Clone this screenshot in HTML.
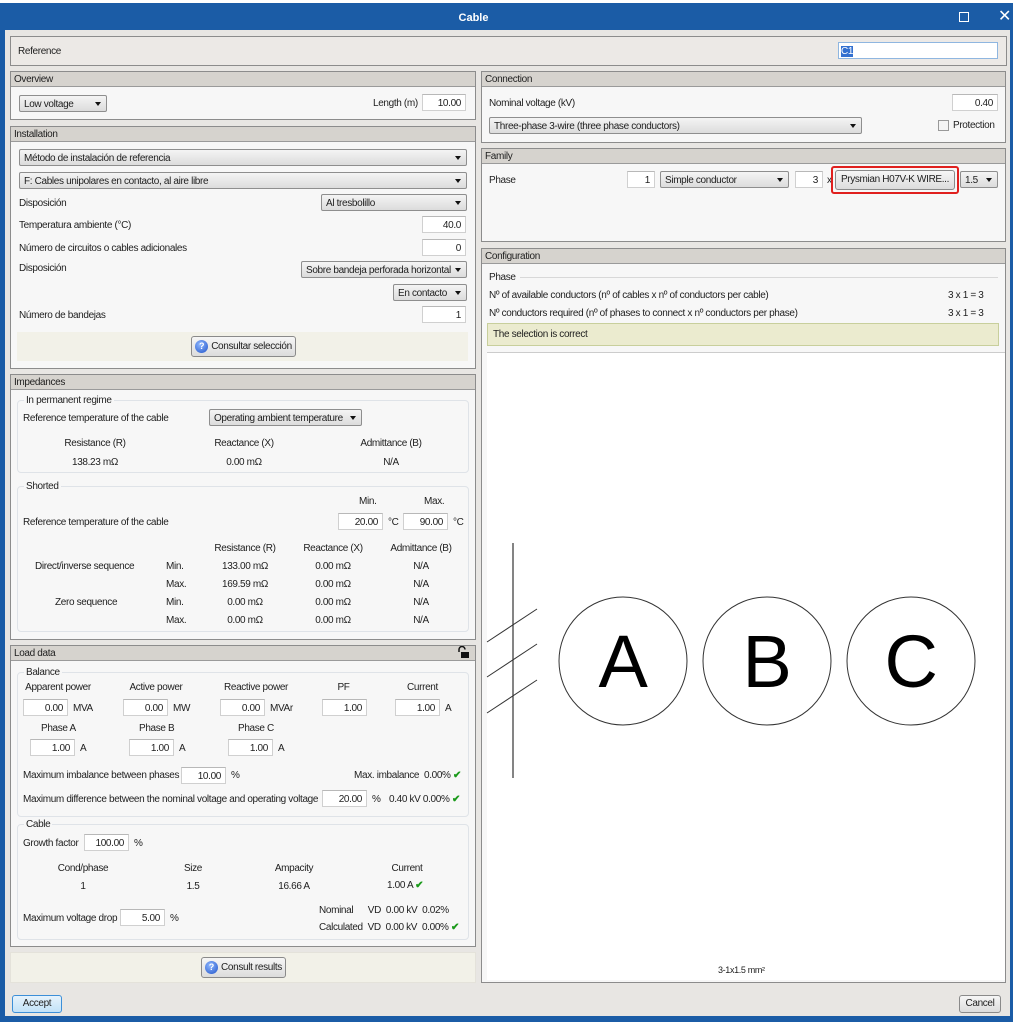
<!DOCTYPE html>
<html><head><meta charset="utf-8"><style>
*{box-sizing:border-box;margin:0;padding:0}
body{width:1017px;height:1024px;position:relative;background:#fff;font-family:"Liberation Sans",sans-serif;font-size:10px;letter-spacing:-0.35px;color:#1e1e1e;overflow:hidden}
.a{position:absolute;white-space:nowrap}
.win{position:absolute;left:0;top:3px;width:1013px;height:1019px;background:#1b5ca6}
.client{position:absolute;left:5px;top:30px;width:1005px;height:986px;background:#e8e6e3}
.pnl{position:absolute;border:1px solid #8c8c8c;background:#f7f7f7}
.hdr{position:absolute;left:0;right:0;top:0;height:15px;background:#d6d3ce;border-bottom:1px solid #9a9a9a;padding-left:3px;line-height:15px}
.inp{position:absolute;white-space:nowrap;background:#fff;border:1px solid #d0d0d0;border-top-color:#b8b8b8;height:17px;text-align:right;padding-right:4px;padding-top:1px;line-height:16px}
.sel{position:absolute;white-space:nowrap;overflow:hidden;height:17px;border:1px solid #8e8e8e;border-radius:2px;background:linear-gradient(#f4f4f4,#dcdcdc);padding-left:4px;padding-top:1px;line-height:16px}
.sel:after{content:"";position:absolute;right:5px;top:6px;border:3.5px solid transparent;border-top:4px solid #111;border-bottom:0}
.btn{position:absolute;white-space:nowrap;border:1px solid #8a8a8a;border-radius:3px;background:linear-gradient(#f6f6f6,#dcdcdc);text-align:center;line-height:19px}
.grp{position:absolute;border:1px solid #dfe3e8;border-radius:4px}
.gl{position:absolute;top:-7px;left:6px;background:#f7f7f7;padding:0 2px}
.ic{display:inline-block;width:13px;height:13px;border-radius:50%;background:radial-gradient(circle at 40% 35%,#8fb8ff,#1f52c8);color:#fff;font-size:9px;font-weight:bold;line-height:13px;vertical-align:middle;margin-right:3px;letter-spacing:0}
.ck{color:#1a9a1a;font-weight:bold}
.c{text-align:center}
</style></head><body>
<div class="win"></div>
<div class="a" style="left:0;top:12px;width:947px;text-align:center;color:#fff;font-weight:bold;font-size:11px;letter-spacing:0">Cable</div>
<div class="a" style="left:959px;top:12px;width:10px;height:10px;border:1.5px solid #fff"></div>
<div class="a" style="left:998px;top:6px;color:#fff;font-size:16px">✕</div>
<div class="client"></div>

<div class="pnl" style="left:10px;top:36px;width:997px;height:30px;background:#ece9e6"></div>
<div class="a" style="left:18px;top:46px">Reference</div>
<div class="inp" style="left:838px;top:42px;width:160px;border-color:#8fb6e0;text-align:left;padding-left:2px"><span style="background:#3370d0;color:#fff">C1</span></div>

<div class="pnl" style="left:10px;top:71px;width:466px;height:49px"><div class="hdr">Overview</div></div>
<div class="sel" style="left:19px;top:95px;width:88px">Low voltage</div>
<div class="a" style="left:373px;top:98px">Length (m)</div>
<div class="inp" style="left:422px;top:94px;width:44px">10.00</div>

<div class="pnl" style="left:10px;top:126px;width:466px;height:243px"><div class="hdr">Installation</div></div>
<div class="sel" style="left:19px;top:149px;width:448px">Método de instalación de referencia</div>
<div class="sel" style="left:19px;top:172px;width:448px">F: Cables unipolares en contacto, al aire libre</div>
<div class="a" style="left:19px;top:198px">Disposición</div>
<div class="sel" style="left:321px;top:194px;width:146px">Al tresbolillo</div>
<div class="a" style="left:19px;top:220px">Temperatura ambiente (°C)</div>
<div class="inp" style="left:422px;top:216px;width:44px">40.0</div>
<div class="a" style="left:19px;top:243px">Número de circuitos o cables adicionales</div>
<div class="inp" style="left:422px;top:239px;width:44px">0</div>
<div class="a" style="left:19px;top:263px">Disposición</div>
<div class="sel" style="left:301px;top:261px;width:166px">Sobre bandeja perforada horizontal</div>
<div class="sel" style="left:393px;top:284px;width:74px">En contacto</div>
<div class="a" style="left:19px;top:310px">Número de bandejas</div>
<div class="inp" style="left:422px;top:306px;width:44px">1</div>
<div class="a" style="left:17px;top:332px;width:451px;height:29px;background:#f2f1e8"></div>
<div class="btn" style="left:191px;top:336px;width:105px;height:21px"><span class="ic">?</span>Consultar selección</div>

<div class="pnl" style="left:10px;top:374px;width:466px;height:266px"><div class="hdr">Impedances</div></div>
<div class="grp" style="left:17px;top:400px;width:452px;height:73px"><span class="gl" style="top:-6px">In permanent regime</span></div>
<div class="a" style="left:23px;top:413px">Reference temperature of the cable</div>
<div class="sel" style="left:209px;top:409px;width:153px">Operating ambient temperature</div>
<div class="a c" style="left:55px;top:438px;width:80px">Resistance (R)</div>
<div class="a c" style="left:204px;top:438px;width:80px">Reactance (X)</div>
<div class="a c" style="left:351px;top:438px;width:80px">Admittance (B)</div>
<div class="a c" style="left:55px;top:457px;width:80px">138.23 mΩ</div>
<div class="a c" style="left:204px;top:457px;width:80px">0.00 mΩ</div>
<div class="a c" style="left:351px;top:457px;width:80px">N/A</div>
<div class="grp" style="left:17px;top:486px;width:452px;height:146px"><span class="gl" style="top:-6px">Shorted</span></div>
<div class="a" style="left:359px;top:496px">Min.</div>
<div class="a" style="left:424px;top:496px">Max.</div>
<div class="a" style="left:23px;top:517px">Reference temperature of the cable</div>
<div class="inp" style="left:338px;top:513px;width:45px">20.00</div><div class="a" style="left:388px;top:517px">°C</div>
<div class="inp" style="left:403px;top:513px;width:45px">90.00</div><div class="a" style="left:453px;top:517px">°C</div>
<div class="a c" style="left:205px;top:543px;width:80px">Resistance (R)</div>
<div class="a c" style="left:293px;top:543px;width:80px">Reactance (X)</div>
<div class="a c" style="left:381px;top:543px;width:80px">Admittance (B)</div>
<div class="a" style="left:35px;top:561px">Direct/inverse sequence</div>
<div class="a" style="left:55px;top:597px">Zero sequence</div>
<div class="a" style="left:166px;top:561px">Min.</div><div class="a" style="left:166px;top:579px">Max.</div>
<div class="a" style="left:166px;top:597px">Min.</div><div class="a" style="left:166px;top:615px">Max.</div>
<div class="a c" style="left:205px;top:561px;width:80px">133.00 mΩ</div>
<div class="a c" style="left:205px;top:579px;width:80px">169.59 mΩ</div>
<div class="a c" style="left:205px;top:597px;width:80px">0.00 mΩ</div>
<div class="a c" style="left:205px;top:615px;width:80px">0.00 mΩ</div>
<div class="a c" style="left:293px;top:561px;width:80px">0.00 mΩ</div>
<div class="a c" style="left:293px;top:579px;width:80px">0.00 mΩ</div>
<div class="a c" style="left:293px;top:597px;width:80px">0.00 mΩ</div>
<div class="a c" style="left:293px;top:615px;width:80px">0.00 mΩ</div>
<div class="a c" style="left:381px;top:561px;width:80px">N/A</div>
<div class="a c" style="left:381px;top:579px;width:80px">N/A</div>
<div class="a c" style="left:381px;top:597px;width:80px">N/A</div>
<div class="a c" style="left:381px;top:615px;width:80px">N/A</div>

<div class="pnl" style="left:10px;top:645px;width:466px;height:302px"><div class="hdr">Load data</div></div>
<svg class="a" style="left:456px;top:646px" width="14" height="13"><path d="M3 6V3.5a3 3 0 0 1 6 0" fill="none" stroke="#111" stroke-width="1.5"/><rect x="5" y="6" width="8" height="6" fill="#111"/></svg>
<div class="grp" style="left:17px;top:672px;width:452px;height:145px"><span class="gl" style="top:-6px">Balance</span></div>
<div class="a c" style="left:22px;top:682px;width:72px">Apparent power</div>
<div class="a c" style="left:120px;top:682px;width:72px">Active power</div>
<div class="a c" style="left:216px;top:682px;width:80px">Reactive power</div>
<div class="a c" style="left:330px;top:682px;width:27px">PF</div>
<div class="a c" style="left:400px;top:682px;width:45px">Current</div>
<div class="inp" style="left:23px;top:699px;width:45px">0.00</div><div class="a" style="left:73px;top:703px">MVA</div>
<div class="inp" style="left:123px;top:699px;width:45px">0.00</div><div class="a" style="left:173px;top:703px">MW</div>
<div class="inp" style="left:220px;top:699px;width:45px">0.00</div><div class="a" style="left:270px;top:703px">MVAr</div>
<div class="inp" style="left:322px;top:699px;width:45px">1.00</div>
<div class="inp" style="left:395px;top:699px;width:45px">1.00</div><div class="a" style="left:445px;top:703px">A</div>
<div class="a" style="left:41px;top:723px">Phase A</div>
<div class="a" style="left:139px;top:723px">Phase B</div>
<div class="a" style="left:238px;top:723px">Phase C</div>
<div class="inp" style="left:30px;top:739px;width:45px">1.00</div><div class="a" style="left:80px;top:743px">A</div>
<div class="inp" style="left:129px;top:739px;width:45px">1.00</div><div class="a" style="left:179px;top:743px">A</div>
<div class="inp" style="left:228px;top:739px;width:45px">1.00</div><div class="a" style="left:278px;top:743px">A</div>
<div class="a" style="left:23px;top:770px">Maximum imbalance between phases</div>
<div class="inp" style="left:181px;top:767px;width:45px">10.00</div><div class="a" style="left:231px;top:770px">%</div>
<div class="a" style="left:354px;top:770px">Max. imbalance&nbsp; 0.00% <span class="ck">✔</span></div>
<div class="a" style="left:23px;top:794px">Maximum difference between the nominal voltage and operating voltage</div>
<div class="inp" style="left:322px;top:790px;width:45px">20.00</div><div class="a" style="left:372px;top:794px">%</div>
<div class="a" style="left:389px;top:794px">0.40 kV 0.00% <span class="ck">✔</span></div>
<div class="grp" style="left:17px;top:824px;width:452px;height:116px"><span class="gl" style="top:-6px">Cable</span></div>
<div class="a" style="left:23px;top:838px">Growth factor</div>
<div class="inp" style="left:84px;top:834px;width:45px">100.00</div><div class="a" style="left:134px;top:838px">%</div>
<div class="a c" style="left:48px;top:863px;width:70px">Cond/phase</div>
<div class="a c" style="left:173px;top:863px;width:40px">Size</div>
<div class="a c" style="left:264px;top:863px;width:60px">Ampacity</div>
<div class="a c" style="left:380px;top:863px;width:54px">Current</div>
<div class="a c" style="left:73px;top:881px;width:20px">1</div>
<div class="a c" style="left:173px;top:881px;width:40px">1.5</div>
<div class="a c" style="left:264px;top:881px;width:60px">16.66 A</div>
<div class="a" style="left:387px;top:880px">1.00 A <span class="ck">✔</span></div>
<div class="a" style="left:23px;top:913px">Maximum voltage drop</div>
<div class="inp" style="left:120px;top:909px;width:45px">5.00</div><div class="a" style="left:170px;top:913px">%</div>
<div class="a" style="left:319px;top:905px">Nominal&nbsp;&nbsp;&nbsp;&nbsp;&nbsp; VD&nbsp; 0.00 kV&nbsp; 0.02%</div>
<div class="a" style="left:319px;top:922px">Calculated&nbsp; VD&nbsp; 0.00 kV&nbsp; 0.00% <span class="ck">✔</span></div>
<div class="a" style="left:10px;top:952px;width:466px;height:31px;background:#f2f1e8;border:1px solid #e4e2da"></div>
<div class="btn" style="left:201px;top:957px;width:85px;height:21px"><span class="ic">?</span>Consult results</div>

<div class="pnl" style="left:481px;top:71px;width:525px;height:72px"><div class="hdr">Connection</div></div>
<div class="a" style="left:489px;top:98px">Nominal voltage (kV)</div>
<div class="inp" style="left:952px;top:94px;width:46px">0.40</div>
<div class="sel" style="left:489px;top:117px;width:373px">Three-phase 3-wire (three phase conductors)</div>
<div class="a" style="left:938px;top:120px;width:11px;height:11px;border:1px solid #999;background:#f4f4f4"></div>
<div class="a" style="left:953px;top:120px">Protection</div>

<div class="pnl" style="left:481px;top:148px;width:525px;height:94px"><div class="hdr">Family</div></div>
<div class="a" style="left:489px;top:175px">Phase</div>
<div class="inp" style="left:627px;top:171px;width:28px">1</div>
<div class="sel" style="left:660px;top:171px;width:129px">Simple conductor</div>
<div class="inp" style="left:795px;top:171px;width:28px">3</div>
<div class="a" style="left:827px;top:175px">x</div>
<div class="a" style="left:831px;top:166px;width:128px;height:28px;border:2px solid #e0201e;border-radius:3px"></div>
<div class="btn" style="left:835px;top:170px;width:120px;height:20px;line-height:18px">Prysmian H07V-K WIRE...</div>
<div class="sel" style="left:960px;top:171px;width:38px">1.5</div>

<div class="pnl" style="left:481px;top:248px;width:525px;height:735px"><div class="hdr">Configuration</div></div>
<div class="a" style="left:489px;top:272px">Phase</div>
<div class="a" style="left:520px;top:277px;width:478px;height:1px;background:#d8d8d8"></div>
<div class="a" style="left:489px;top:290px">Nº of available conductors (nº of cables x nº of conductors per cable)</div>
<div class="a" style="left:948px;top:290px">3 x 1 = 3</div>
<div class="a" style="left:489px;top:308px">Nº conductors required (nº of phases to connect x nº conductors per phase)</div>
<div class="a" style="left:948px;top:308px">3 x 1 = 3</div>
<div class="a" style="left:487px;top:323px;width:512px;height:23px;background:#ebebcf;border:1px solid #c8cf9c;padding-left:5px;line-height:21px">The selection is correct</div>
<div class="a" style="left:487px;top:352px;width:518px;height:628px;background:#fff;border-top:1px solid #ccc"></div>
<svg class="a" style="left:482px;top:530px" width="520" height="300">
<line x1="31" y1="13" x2="31" y2="248" stroke="#333" stroke-width="1.2"/>
<line x1="5" y1="112" x2="55" y2="79" stroke="#333"/>
<line x1="5" y1="147" x2="55" y2="114" stroke="#333"/>
<line x1="5" y1="183" x2="55" y2="150" stroke="#333"/>
<circle cx="141" cy="131" r="64" fill="none" stroke="#333"/>
<circle cx="285" cy="131" r="64" fill="none" stroke="#333"/>
<circle cx="429" cy="131" r="64" fill="none" stroke="#333"/>
<text x="141" y="157" text-anchor="middle" font-family="Liberation Sans" font-size="74" fill="#000">A</text>
<text x="285" y="157" text-anchor="middle" font-family="Liberation Sans" font-size="74" fill="#000">B</text>
<text x="429" y="157" text-anchor="middle" font-family="Liberation Sans" font-size="74" fill="#000">C</text>
</svg>
<div class="a" style="left:718px;top:965px;font-size:9px">3-1x1.5 mm²</div>

<div class="btn" style="left:12px;top:995px;width:50px;height:18px;line-height:16px;border-color:#3c8fd8;background:linear-gradient(#e6f3fc,#c2e2f8)">Accept</div>
<div class="btn" style="left:959px;top:995px;width:42px;height:18px;line-height:16px">Cancel</div>
</body></html>
